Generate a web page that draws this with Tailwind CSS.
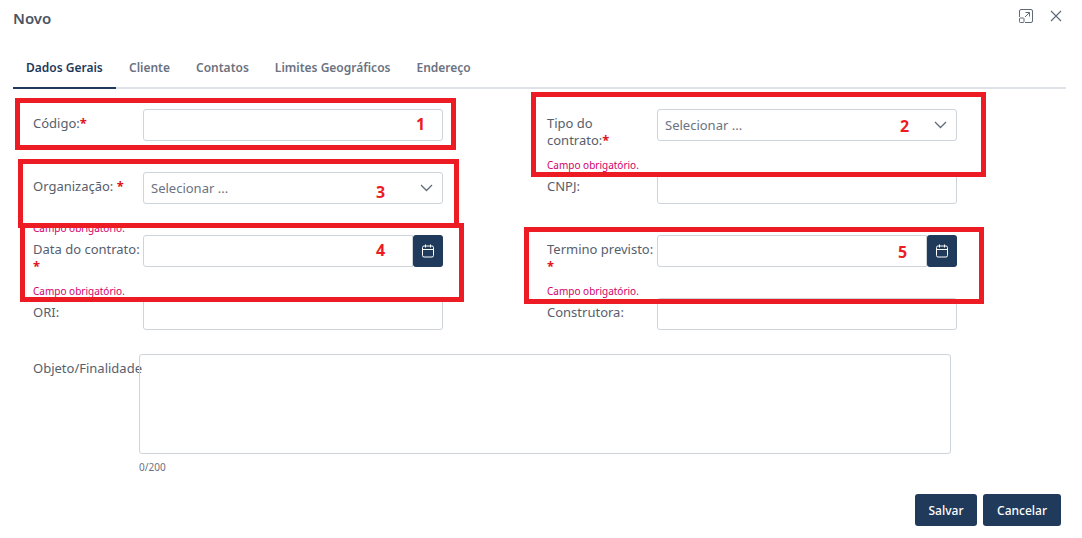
<!DOCTYPE html>
<html lang="pt">
<head>
<meta charset="utf-8">
<script src="https://cdn.jsdelivr.net/npm/@tailwindcss/browser@4"></script>
<title>Novo</title>
</head>
<body class="bg-white">
<div class="relative w-[1082px] h-[538px] overflow-hidden bg-white font-['Noto_Sans',sans-serif] text-[13px] leading-[17px] text-[#56606d]">
  <header class="flex items-start justify-between h-[47px] pl-[13px] pr-[20px] pt-[8px]">
    <h1 class="text-[15px] leading-[20px] font-semibold text-[#4b5563]">Novo</h1>
    <div class="flex items-center gap-[17px] pt-px">
      <svg class="w-[14px] h-[14px]" viewBox="0 0 14 14" fill="none" stroke="#5f6b7a" stroke-width="1"><path d="M5 .5h7a1.5 1.5 0 0 1 1.500 1.500v10a1.500 1.500 0 0 1-1.500 1.500H6M.5 8V2A1.500 1.500 0 0 1 2 .5h3"/><rect x=".5" y="9" width="4.500" height="4.500" rx=".8"/><path d="M6 8l4-4M6.500 3.500H10.500V7.500"/></svg>
      <svg class="w-[12px] h-[12px]" viewBox="0 0 12 12" fill="none" stroke="#5f6b7a" stroke-width="1.200"><path d="M1 1l10 10M11 1L1 11"/></svg>
    </div>
  </header>

  <nav class="mx-[13px] w-[1053px] h-[42px] pt-[7px] flex border-b-2 border-[#dee2e6] text-[12px] leading-[16px] font-semibold text-[#6b7280]">
    <a class="w-[103px] h-[35px] -mb-[2px] pt-[6px] pl-[13px] border-b-2 border-[#1f3a5a] text-[#1f3a5a]">Dados Gerais</a>
    <a class="pt-[6px] pl-[13px] pr-[13px]">Cliente</a>
    <a class="pt-[6px] px-[13px]">Contatos</a>
    <a class="pt-[6px] px-[13px]">Limites Geográficos</a>
    <a class="pt-[6px] px-[13px]">Endereço</a>
  </nav>

  <main class="grid grid-cols-[514px_410px] auto-rows-[63px] pl-[33px] pt-[20px]">
    <div class="flex">
      <label class="w-[110px] pt-[6px]">Código:<span class="text-[#e0141c] font-bold">*</span></label>
      <div class="w-[300px] h-[32px] bg-white border border-[#ced4da] rounded-[3px]"></div>
    </div>
    <div>
      <div class="flex h-[50px]">
        <label class="w-[110px] pt-[6px]">Tipo do contrato:<span class="text-[#e0141c] font-bold">*</span></label>
        <div class="w-[300px] h-[32px] bg-white border border-[#ced4da] rounded-[3px] flex items-center justify-between pl-[7px] pr-[9px] text-[#6b7280]">
          <span>Selecionar ...</span>
          <svg class="w-[13px] h-[8px]" viewBox="0 0 13 8" fill="none" stroke="#5f6b7a" stroke-width="1.300"><path d="M1 1l5.500 5.500L12 1"/></svg>
        </div>
      </div>
      <p class="text-[10px] leading-[12px] text-[#d4006a]">Campo obrigatório.</p>
    </div>

    <div>
      <div class="flex h-[50px]">
        <label class="w-[110px] pt-[6px]">Organização: <span class="text-[#e0141c] font-bold">*</span></label>
        <div class="w-[300px] h-[32px] bg-white border border-[#ced4da] rounded-[3px] flex items-center justify-between pl-[7px] pr-[9px] text-[#6b7280]">
          <span>Selecionar ...</span>
          <svg class="w-[13px] h-[8px]" viewBox="0 0 13 8" fill="none" stroke="#5f6b7a" stroke-width="1.300"><path d="M1 1l5.500 5.500L12 1"/></svg>
        </div>
      </div>
      <p class="text-[10px] leading-[12px] text-[#d4006a]">Campo obrigatório.</p>
    </div>
    <div class="flex">
      <label class="w-[110px] pt-[6px]">CNPJ:</label>
      <div class="w-[300px] h-[32px] bg-white border border-[#ced4da] rounded-[3px]"></div>
    </div>

    <div>
      <div class="flex h-[50px]">
        <label class="w-[110px] pt-[6px]">Data do contrato: <span class="text-[#e0141c] font-bold">*</span></label>
        <div class="flex w-[300px] h-[32px]">
          <div class="flex-1 border border-[#ced4da] rounded-l-[3px]"></div>
          <button class="w-[30px] bg-[#1f3a5a] rounded-[3px] flex items-center justify-center">
            <svg class="w-[12px] h-[14px]" viewBox="0 0 12 14" fill="none" stroke="#fff" stroke-width="1"><rect x=".5" y="2" width="11" height="11" rx="1.500"/><path d="M.5 5.500h11M3.500 .5v3M8.500 .5v3"/></svg>
          </button>
        </div>
      </div>
      <p class="text-[10px] leading-[12px] text-[#d4006a]">Campo obrigatório.</p>
    </div>
    <div>
      <div class="flex h-[50px]">
        <label class="w-[110px] pt-[6px]">Termino previsto: <span class="text-[#e0141c] font-bold">*</span></label>
        <div class="flex w-[300px] h-[32px]">
          <div class="flex-1 border border-[#ced4da] rounded-l-[3px]"></div>
          <button class="w-[30px] bg-[#1f3a5a] rounded-[3px] flex items-center justify-center">
            <svg class="w-[12px] h-[14px]" viewBox="0 0 12 14" fill="none" stroke="#fff" stroke-width="1"><rect x=".5" y="2" width="11" height="11" rx="1.500"/><path d="M.5 5.500h11M3.500 .5v3M8.500 .5v3"/></svg>
          </button>
        </div>
      </div>
      <p class="text-[10px] leading-[12px] text-[#d4006a]">Campo obrigatório.</p>
    </div>

    <div class="flex">
      <label class="w-[110px] pt-[6px]">ORI:</label>
      <div class="w-[300px] h-[32px] bg-white border border-[#ced4da] rounded-[3px]"></div>
    </div>
    <div class="flex">
      <label class="w-[110px] pt-[6px]">Construtora:</label>
      <div class="w-[300px] h-[32px] bg-white border border-[#ced4da] rounded-[3px]"></div>
    </div>
  </main>

  <section class="flex pl-[33px] pt-[-7px] -mt-[7px]">
    <label class="w-[106px] pt-[6px] whitespace-nowrap">Objeto/Finalidade</label>
    <div>
      <div class="w-[812px] h-[100px] border border-[#ced4da] rounded-[3px]"></div>
      <p class="mt-[6px] text-[10px] leading-[14px] text-[#6b7280]">0/200</p>
    </div>
  </section>

  <footer class="flex justify-end gap-[6px] pr-[21px] mt-[20px]">
    <button class="w-[62px] h-[32px] rounded-[3px] bg-[#1f3a5a] text-white text-[12px] font-medium">Salvar</button>
    <button class="w-[78px] h-[32px] rounded-[3px] bg-[#1f3a5a] text-white text-[12px] font-medium">Cancelar</button>
  </footer>

  <!-- Anotações sobre a captura -->
  <div class="absolute left-[15px] top-[98px] w-[441px] h-[52px] border-[5px] border-[#ed1c24]"></div>
  <div class="absolute left-[531px] top-[92px] w-[455px] h-[85px] border-[5px] border-[#ed1c24]"></div>
  <div class="absolute left-[18px] top-[159px] w-[441px] h-[69px] border-[5px] border-[#ed1c24]"></div>
  <div class="absolute left-[20px] top-[223px] w-[444px] h-[79px] border-[5px] border-[#ed1c24]"></div>
  <div class="absolute left-[524px] top-[227px] w-[460px] h-[77px] border-[5px] border-[#ed1c24]"></div>
  <span class="absolute left-[416px] top-[113px] text-[16px] leading-[22px] font-bold text-[#ed1c24]">1</span>
  <span class="absolute left-[900px] top-[115px] text-[16px] leading-[22px] font-bold text-[#ed1c24]">2</span>
  <span class="absolute left-[376px] top-[181px] text-[16px] leading-[22px] font-bold text-[#ed1c24]">3</span>
  <span class="absolute left-[376px] top-[239px] text-[16px] leading-[22px] font-bold text-[#ed1c24]">4</span>
  <span class="absolute left-[898px] top-[241px] text-[16px] leading-[22px] font-bold text-[#ed1c24]">5</span>
</div>
</body>
</html>
